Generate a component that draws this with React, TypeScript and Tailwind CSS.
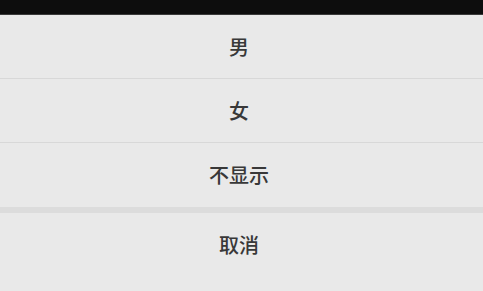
const font = { fontFamily: '"Noto Sans CJK SC", "Noto Sans", sans-serif' };

const options = ["男", "女", "不显示"];

export default function App() {
  return (
    <div className="flex h-[291px] w-[483px] flex-col overflow-hidden bg-[#e9e9e9]" style={font}>
      <div className="h-[15px] border-b border-[#3a3a3a] bg-[#0d0d0d]" />
      <div className="flex flex-col">
        {options.map((label, i) => (
          <button
            key={label}
            className={`flex h-[64px] items-center justify-center pr-[5px] text-[20px] font-medium text-[#383838] ${
              i < options.length - 1 ? "border-b border-[#d8d8d8]" : ""
            }`}
          >
            {label}
          </button>
        ))}
      </div>
      <div className="h-[6px] bg-[#dcdcdc]" />
      <button className="flex h-[64px] items-center justify-center pr-[5px] text-[20px] font-medium text-[#383838]">
        取消
      </button>
    </div>
  );
}
